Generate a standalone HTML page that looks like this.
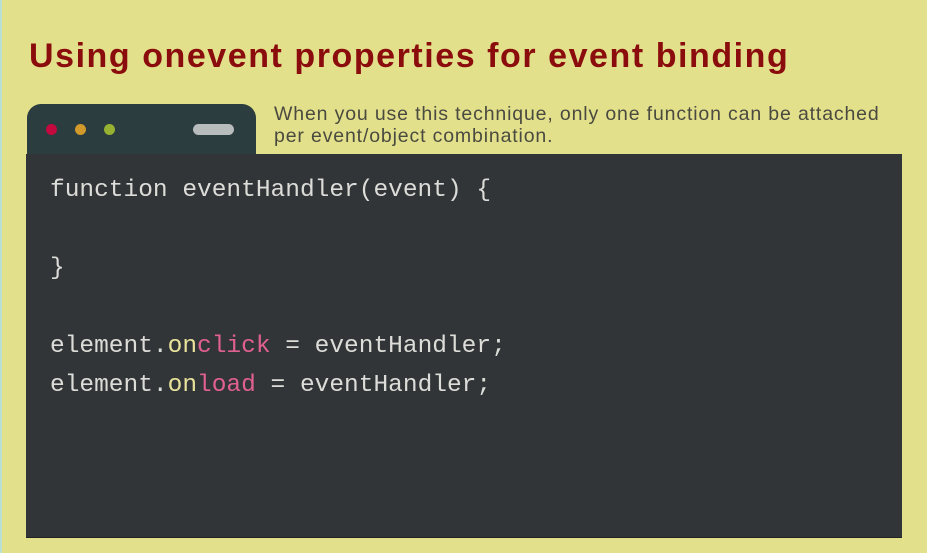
<!DOCTYPE html>
<html><head><style>
*{margin:0;padding:0}
body{width:927px;height:553px;background:#e2e08b;position:relative;overflow:hidden;font-family:"Liberation Sans",sans-serif}
.edge{position:absolute;left:0;top:0;width:2px;height:553px;background:#b9e0d0}
h1{position:absolute;left:29px;top:37px;font-size:34px;font-weight:bold;color:#8a0c0c;white-space:nowrap;letter-spacing:1.55px}
.sub{position:absolute;left:274px;top:103px;font-size:19.5px;line-height:22px;color:#4a4a40;white-space:nowrap;letter-spacing:0.85px}
.tab{position:absolute;left:27px;top:104px;width:229px;height:52px;background:#2c3d40;border-radius:14px 14px 0 0}
.dot{position:absolute;top:20px;width:11px;height:11px;border-radius:50%}
.bar{position:absolute;left:166px;top:20px;width:41px;height:11px;border-radius:6px;background:#b9bcbc}
.code{position:absolute;left:26px;top:154px;width:876px;height:383px;background:#323538;border-bottom:1px solid #222}
pre{position:absolute;left:50px;top:171px;font-family:"Liberation Mono",monospace;font-size:24.5px;line-height:39px;color:#dcdcd8}
.y{color:#e8e29a}.p{color:#e0608e}
</style></head><body>
<div class="edge"></div>
<h1>Using onevent properties for event binding</h1>
<div class="tab">
<div class="dot" style="left:19px;background:#c4093f"></div>
<div class="dot" style="left:48px;background:#d19a2a"></div>
<div class="dot" style="left:77px;background:#97b232"></div>
<div class="bar"></div>
</div>
<div class="sub">When you use this technique, only one function can be attached<br>per event/object combination.</div>
<div class="code"></div>
<pre>function eventHandler(event) {

}

element.<span class="y">on</span><span class="p">click</span> = eventHandler;
element.<span class="y">on</span><span class="p">load</span> = eventHandler;</pre>
</body></html>
